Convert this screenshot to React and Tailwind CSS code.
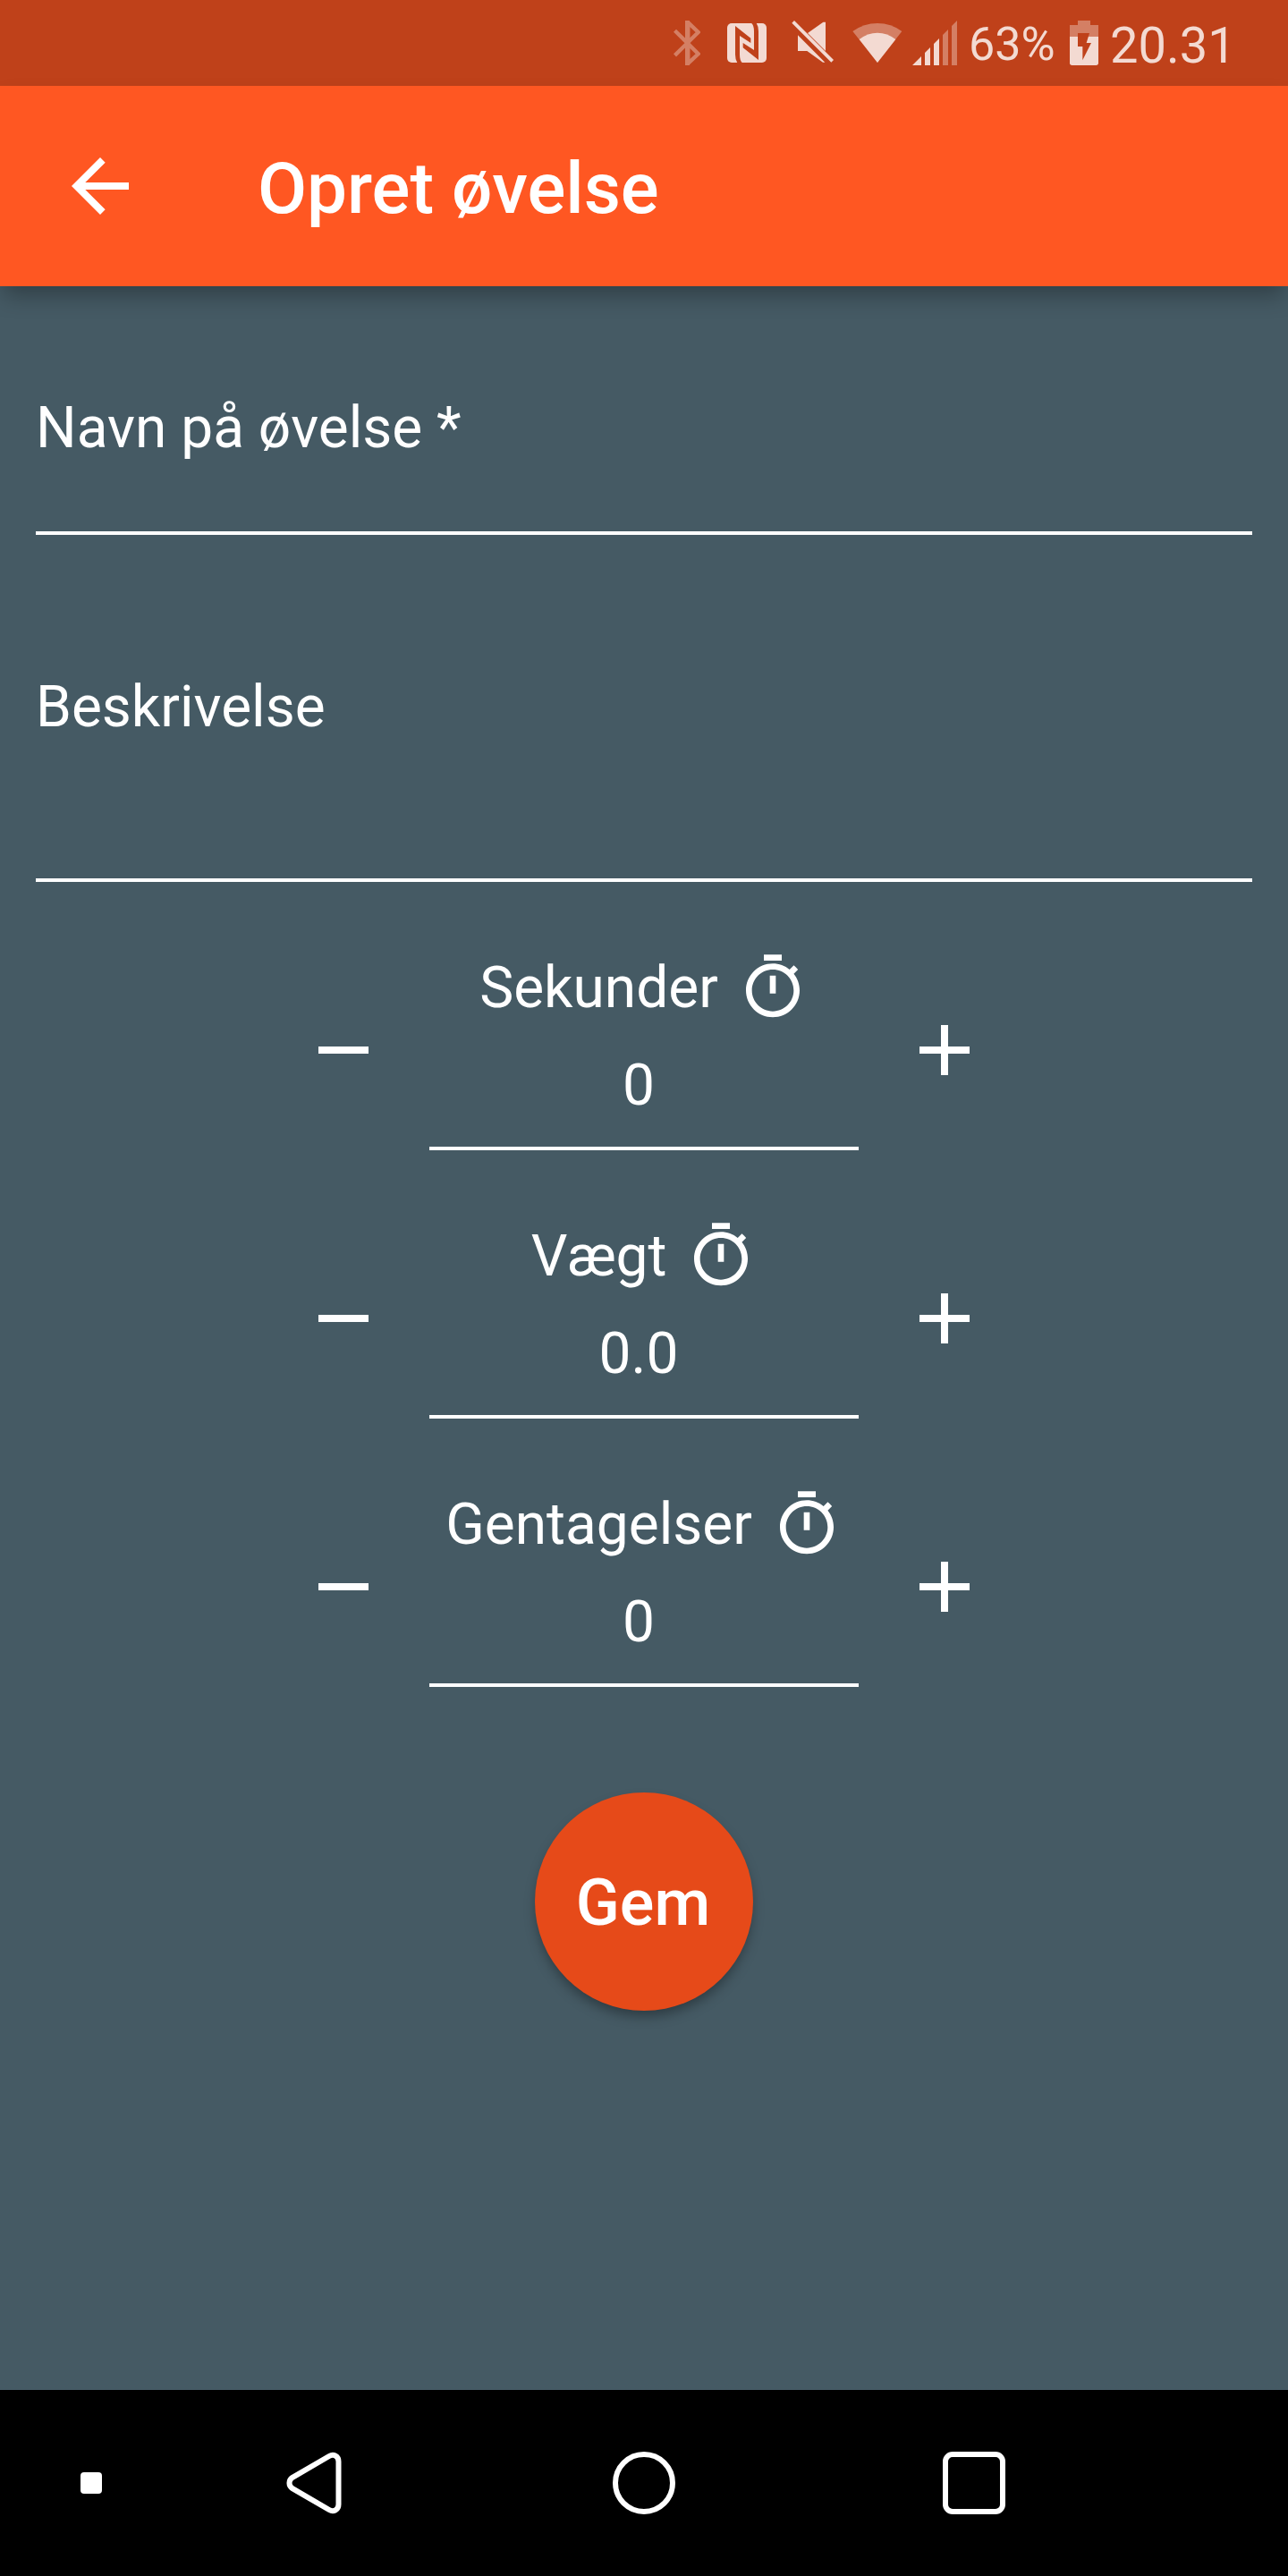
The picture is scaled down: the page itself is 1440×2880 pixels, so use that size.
import React from "react";

const LIGHT = "#F3DAD2";
const DIM = "#D47F64";
const BAR = "#BF411A";

function StatusBar() {
  return (
    <div className="flex h-24 items-start bg-[#BF411A] pl-[753px] pt-[23px] text-[#F3DAD2]">
      {/* Bluetooth */}
      <svg className="h-[50px] w-[30px] shrink-0" viewBox="39 69 90 150" fill="none" stroke={DIM} strokeWidth="13">
        <path d="M43.500 102.500L122 181 87 213.500V74.500L122 108 43.500 185.500" strokeLinejoin="miter" />
        <path d="M78 69H92L94 78V210L92 219H78Z" fill={DIM} stroke="none" />
      </svg>
      {/* NFC */}
      <svg className="ml-[30px] h-[50px] w-[44px] shrink-0" viewBox="219 69 132 150">
        <rect x="219" y="78" width="132" height="132" rx="15" fill={LIGHT} />
        <path d="M246 87L298 128V144L261 120V183Q261 204 270 211H253Q246 200 246 183Z" fill={BAR} />
        <path d="M324 201L272 160V144L309 168V105Q309 84 300 77H317Q324 88 324 105Z" fill={BAR} />
      </svg>
      {/* Muted speaker */}
      <svg className="ml-[28px] h-[50px] w-[47px] shrink-0" viewBox="435 69 141 150" fill={LIGHT}>
        <path d="M436 77L444 69 576 201 568 209Z" />
        <path d="M489 111L541 74H549V171Z" />
        <path d="M456 118L547 209H540L487 171H456Z" />
      </svg>
      {/* Wi-Fi */}
      <svg className="ml-[21px] h-[50px] w-[56px] shrink-0" viewBox="639 69 168 150">
        <path d="M723 210L640 105Q677 78 723 78T805 105Z" fill={DIM} />
        <path d="M723 210L662 132Q690 110 723 110T784 132Z" fill={LIGHT} />
      </svg>
      {/* Signal */}
      <svg className="ml-[11px] h-[50px] w-[50px] shrink-0" viewBox="840 69 150 150">
        <path d="M840 219L870 189V219ZM882 177L900 159V219H882ZM912 147L930 129V219H912Z" fill={LIGHT} />
        <path d="M942 117L960 99V219H942ZM972 87L990 69V219H972Z" fill={DIM} />
      </svg>
      <span className="ml-[13px] w-24 shrink-0 text-[52px] leading-[54px]">63%</span>
      {/* Charging battery */}
      <svg className="ml-[17px] h-[50px] w-8 shrink-0" viewBox="408 69 96 150">
        <path d="M435 69H477V84H504V124H408V84H435Z" fill={DIM} />
        <path d="M408 123H504V211Q504 219 496 219H416Q408 219 408 211Z" fill={LIGHT} />
        <path d="M435 111H474L464 144H480L451 202V156H435Z" fill={BAR} />
      </svg>
      <span className="ml-[13px] shrink-0 text-[56px] leading-[56px]">20.31</span>
    </div>
  );
}

function AppBar() {
  return (
    <header className="relative z-10 flex h-56 items-center bg-[#FF5722] pl-16 shadow-[0_14px_24px_-4px_rgba(0,0,0,0.3)]">
      <button className="shrink-0" aria-label="Tilbage">
        <svg className="size-24" viewBox="0 0 24 24" fill="white">
          <path d="M20 11H7.830l5.590-5.590L12 4l-8 8 8 8 1.410-1.410L7.830 13H20v-2z" />
        </svg>
      </button>
      <h1 className="ml-32 pt-[5px] text-[80px] font-medium leading-[94px]">Opret øvelse</h1>
    </header>
  );
}

function TimerIcon() {
  return (
    <svg className="size-20 shrink-0" viewBox="0 0 24 24" fill="white">
      <path d="M15 1H9v2h6V1zm-4 13h2V8h-2v6zm8.030-6.610l1.420-1.420c-.43-.51-.9-.99-1.410-1.410l-1.420 1.420C16.070 4.740 14.120 4 12 4c-4.970 0-9 4.030-9 9s4.020 9 9 9 9-4.030 9-9c0-2.120-.74-4.070-1.970-5.610zM12 20c-3.870 0-7-3.130-7-7s3.130-7 7-7 7 3.130 7 7-3.130 7-7 7z" />
    </svg>
  );
}

function Stepper({ label, value }) {
  return (
    <div className="flex items-start justify-center gap-12">
      <button className="pt-[62px]" aria-label="Minus">
        <svg className="size-24" viewBox="0 0 24 24" fill="white">
          <path d="M5 11h14v2H5z" />
        </svg>
      </button>
      <div className="w-[480px] border-b-4 border-white">
        <div className="flex h-20 items-center justify-center gap-[21px]">
          <span className="pt-0.5 leading-[76px]">{label}</span>
          <TimerIcon />
        </div>
        <div className="pb-[30px] pr-3 pt-8 text-center leading-[76px]">{value}</div>
      </div>
      <button className="pt-[62px]" aria-label="Plus">
        <svg className="size-24" viewBox="0 0 24 24" fill="white">
          <path d="M19 13h-6v6h-2v-6H5v-2h6V5h2v6h6z" />
        </svg>
      </button>
    </div>
  );
}

function NavBar() {
  return (
    <nav className="flex h-52 items-center bg-black pl-[90px]">
      <div className="size-6 shrink-0 rounded bg-white" />
      <svg className="ml-[206px] h-[70px] w-[62px] shrink-0" viewBox="0 0 62 70" fill="none" stroke="white" strokeWidth="6">
        <path d="M7 28.800L48 5C53 2 58.500 5 58.500 11V59C58.500 65 53 68 48 65L7 41.200C2.300 38 2.300 32 7 28.800Z" />
      </svg>
      <div className="ml-[303px] size-[70px] shrink-0 rounded-full border-[6px] border-white" />
      <div className="ml-[299px] size-[70px] shrink-0 rounded-[11px] border-[6px] border-white" />
    </nav>
  );
}

export default function App() {
  return (
    <div className="flex h-[2880px] w-[1440px] flex-col overflow-hidden bg-[#455A64] font-['Roboto',sans-serif] text-white">
      <StatusBar />
      <AppBar />
      <main className="flex-1 px-10 pt-[121px] text-[64px]">
        <div className="border-b-4 border-white pb-[77px] leading-[76px]">Navn på øvelse *</div>
        <div className="mt-[155px] border-b-4 border-white pb-[153px] leading-[76px]">Beskrivelse</div>
        <div className="mt-[78px] flex flex-col gap-[78px]">
          <Stepper label="Sekunder" value="0" />
          <Stepper label="Vægt" value="0.0" />
          <Stepper label="Gentagelser" value="0" />
        </div>
        <button className="mx-auto mt-[118px] flex size-[244px] items-center justify-center rounded-full bg-[#E64A19] pr-0.5 pt-[3px] text-[72px] font-medium shadow-[0_8px_14px_-2px_rgba(0,0,0,0.35)]">
          Gem
        </button>
      </main>
      <NavBar />
    </div>
  );
}
